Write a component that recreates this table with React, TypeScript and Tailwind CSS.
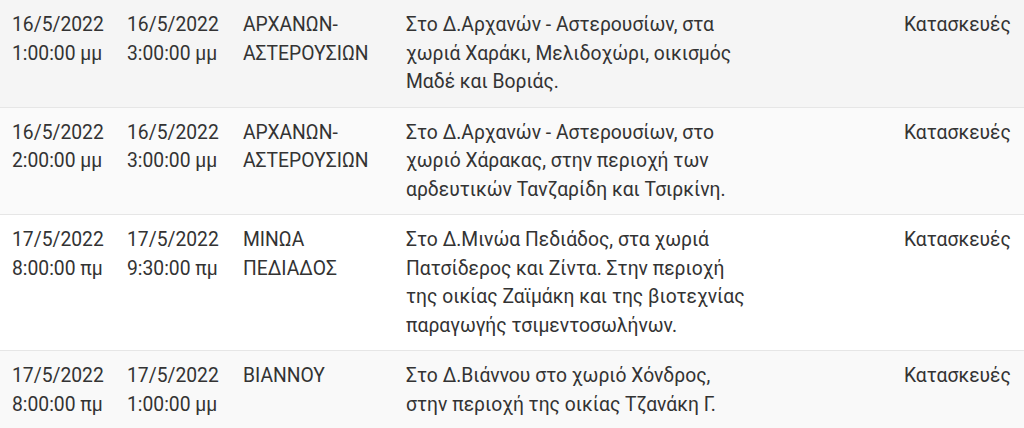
import React from "react";

type Row = {
  start: [string, string];
  end: [string, string];
  area: string[];
  desc: string[];
  cat: string;
  bg: string;
};

const rows: Row[] = [
  {
    start: ["16/5/2022", "1:00:00 μμ"],
    end: ["16/5/2022", "3:00:00 μμ"],
    area: ["ΑΡΧΑΝΩΝ-", "ΑΣΤΕΡΟΥΣΙΩΝ"],
    desc: [
      "Στο Δ.Αρχανών - Αστερουσίων, στα",
      "χωριά Χαράκι, Μελιδοχώρι, οικισμός",
      "Μαδέ και Βοριάς.",
    ],
    cat: "Κατασκευές",
    bg: "bg-[#f5f5f5]",
  },
  {
    start: ["16/5/2022", "2:00:00 μμ"],
    end: ["16/5/2022", "3:00:00 μμ"],
    area: ["ΑΡΧΑΝΩΝ-", "ΑΣΤΕΡΟΥΣΙΩΝ"],
    desc: [
      "Στο Δ.Αρχανών - Αστερουσίων, στο",
      "χωριό Χάρακας, στην περιοχή των",
      "αρδευτικών Τανζαρίδη και Τσιρκίνη.",
    ],
    cat: "Κατασκευές",
    bg: "bg-[#fafafa]",
  },
  {
    start: ["17/5/2022", "8:00:00 πμ"],
    end: ["17/5/2022", "9:30:00 πμ"],
    area: ["ΜΙΝΩΑ", "ΠΕΔΙΑΔΟΣ"],
    desc: [
      "Στο Δ.Μινώα Πεδιάδος, στα χωριά",
      "Πατσίδερος και Ζίντα. Στην περιοχή",
      "της οικίας Ζαϊμάκη και της βιοτεχνίας",
      "παραγωγής τσιμεντοσωλήνων.",
    ],
    cat: "Κατασκευές",
    bg: "bg-white",
  },
  {
    start: ["17/5/2022", "8:00:00 πμ"],
    end: ["17/5/2022", "1:00:00 μμ"],
    area: ["ΒΙΑΝΝΟΥ"],
    desc: [
      "Στο Δ.Βιάννου στο χωριό Χόνδρος,",
      "στην περιοχή της οικίας Τζανάκη Γ.",
    ],
    cat: "Κατασκευές",
    bg: "bg-[#f9f9f9]",
  },
];

function Lines({ lines }: { lines: string[] }) {
  return (
    <div>
      {lines.map((l, i) => (
        <div key={i} className="whitespace-nowrap">
          {l}
        </div>
      ))}
    </div>
  );
}

export default function App() {
  return (
    <div
      className="w-[1024px] h-[428px] overflow-hidden bg-white text-[#333333] text-[19.3px] leading-[28.5px]"
      style={{ fontFamily: "Roboto, 'Noto Sans', sans-serif" }}
    >
      {rows.map((r, i) => (
        <div
          key={i}
          className={`grid grid-cols-[115px_116px_163px_498px_1fr] border-b border-[#e6e6e6] pt-[11px] pb-[10px] ${r.bg}`}
        >
          <div className="pl-[12px]">
            <Lines lines={r.start} />
          </div>
          <div className="pl-[12px]">
            <Lines lines={r.end} />
          </div>
          <div className="pl-[12px]">
            <Lines lines={r.area} />
          </div>
          <div className="pl-[12px]">
            <Lines lines={r.desc} />
          </div>
          <div className="pl-[12px]">
            <Lines lines={[r.cat]} />
          </div>
        </div>
      ))}
    </div>
  );
}
